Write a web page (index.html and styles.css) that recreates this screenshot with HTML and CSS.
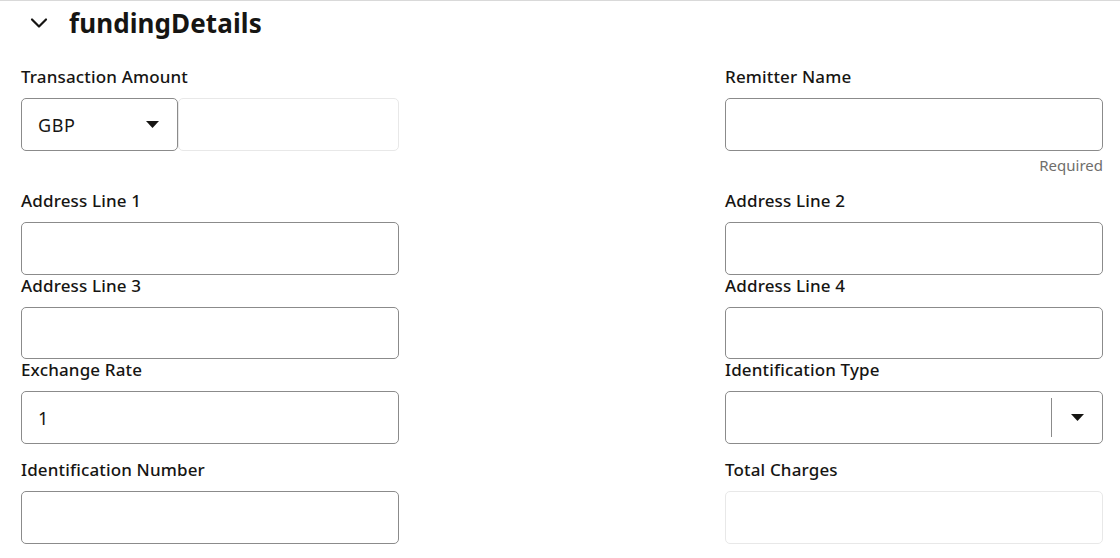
FILE: index.html
```html
<!DOCTYPE html>
<html lang="en">
<head>
<meta charset="utf-8">
<title>fundingDetails</title>
<link rel="stylesheet" href="styles.css">
</head>
<body>
<div class="page">
  <div class="section-header">
    <svg class="chevron" width="18" height="12" viewBox="0 0 18 12" aria-hidden="true">
      <path d="M2 2.5 L9 9.5 L16 2.5" fill="none" stroke="#161513" stroke-width="2.2" stroke-linecap="round" stroke-linejoin="round"/>
    </svg>
    <h2 class="section-title">fundingDetails</h2>
  </div>

  <div class="form-grid">
    <div class="field">
      <div class="label">Transaction Amount</div>
      <div class="amount">
        <div class="box select currency">
          <span class="value">GBP</span>
          <svg class="caret" width="13" height="7" viewBox="0 0 13 7" aria-hidden="true"><path d="M0 0 H13 L6.5 7 Z" fill="#161513"/></svg>
        </div>
        <div class="box readonly amount-input"></div>
      </div>
    </div>
    <div class="field">
      <div class="label">Remitter Name</div>
      <div class="box"></div>
      <div class="helper">Required</div>
    </div>

    <div class="field">
      <div class="label">Address Line 1</div>
      <div class="box"></div>
    </div>
    <div class="field">
      <div class="label">Address Line 2</div>
      <div class="box"></div>
    </div>

    <div class="field">
      <div class="label">Address Line 3</div>
      <div class="box box-short"></div>
    </div>
    <div class="field">
      <div class="label">Address Line 4</div>
      <div class="box box-short"></div>
    </div>

    <div class="field field-spaced">
      <div class="label">Exchange Rate</div>
      <div class="box"><span class="value">1</span></div>
    </div>
    <div class="field field-spaced">
      <div class="label">Identification Type</div>
      <div class="box combo">
        <span class="combo-text"></span>
        <span class="combo-divider"></span>
        <span class="combo-btn">
          <svg class="caret" width="13" height="7" viewBox="0 0 13 7" aria-hidden="true"><path d="M0 0 H13 L6.5 7 Z" fill="#161513"/></svg>
        </span>
      </div>
    </div>

    <div class="field">
      <div class="label">Identification Number</div>
      <div class="box"></div>
    </div>
    <div class="field">
      <div class="label">Total Charges</div>
      <div class="box readonly"></div>
    </div>
  </div>
</div>
</body>
</html>
```

FILE: styles.css
```css
* {
  box-sizing: border-box;
}

html, body {
  margin: 0;
  padding: 0;
  background: #ffffff;
}

body {
  font-family: "Noto Sans", "Open Sans", "Liberation Sans", sans-serif;
  color: #161513;
}

.page {
  width: 1120px;
  border-top: 1px solid #d9d9d9;
}

.section-header {
  display: flex;
  align-items: center;
  height: 43px;
  padding-left: 30px;
}

.chevron {
  display: block;
  margin-right: 21px;
}

.section-title {
  margin: 0;
  font-size: 26px;
  font-weight: 700;
  line-height: 30px;
  letter-spacing: 0.1px;
}

.form-grid {
  display: grid;
  grid-template-columns: 378px 378px;
  justify-content: space-between;
  align-items: start;
  padding: 22px 17px 0 21px;
}

.field {
  display: flex;
  flex-direction: column;
}

.field-spaced {
  margin-bottom: 15px;
}

.label {
  font-size: 17px;
  font-weight: 500;
  line-height: 22px;
  letter-spacing: 0.15px;
  margin-bottom: 10px;
  color: #161513;
}

.box {
  height: 53px;
  border: 1px solid #8b8b8b;
  border-radius: 5px;
  display: flex;
  align-items: center;
  padding: 0 16px;
  background: #fff;
}

.box-short {
  height: 52px;
}

.box.readonly {
  border-color: #e8e8e8;
}

.value {
  font-size: 18px;
  letter-spacing: 0.6px;
  color: #161513;
}

.amount {
  display: flex;
}

.currency {
  width: 157px;
  flex: none;
  justify-content: space-between;
  padding-right: 18px;
}

.amount-input {
  flex: 1;
}

.caret {
  display: block;
}

.helper {
  text-align: right;
  font-size: 15px;
  line-height: 20px;
  color: #6f6e6b;
  padding-top: 4px;
  margin-bottom: 15px;
}

.combo {
  padding: 0;
}

.combo-text {
  flex: 1;
}

.combo-divider {
  width: 1px;
  align-self: stretch;
  margin: 6px 0;
  background: #8b8b8b;
}

.combo-btn {
  width: 50px;
  display: flex;
  justify-content: center;
  align-items: center;
}
```
